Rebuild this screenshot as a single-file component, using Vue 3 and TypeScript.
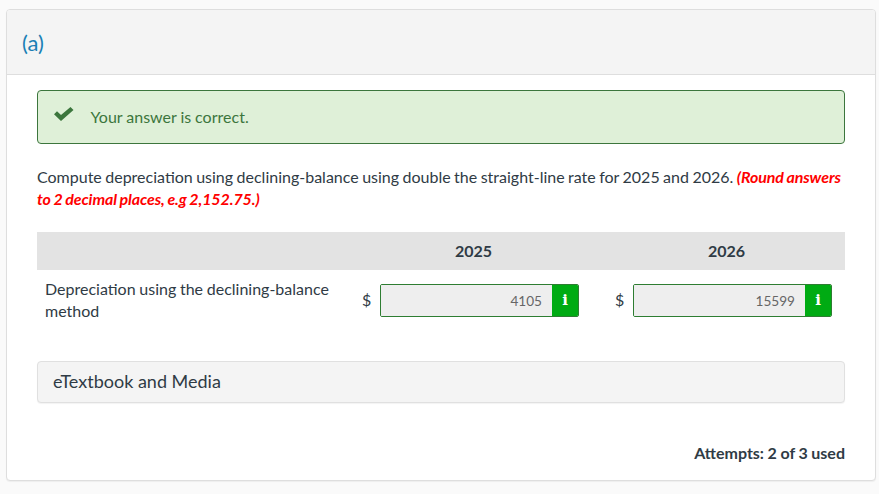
<script setup lang="ts">
interface Answer {
  year: string;
  value: string;
}

const answers: Answer[] = [
  { year: "2025", value: "4105" },
  { year: "2026", value: "15599" },
];
</script>

<template>
  <div class="page">
    <div class="card">
      <div class="card-header">(a)</div>
      <div class="card-body">
        <div class="alert">
          <svg class="check" viewBox="0 0 20 16" width="20" height="16">
            <path d="M0 9.2 L3 6.2 L7 10 L16.5 2 L19.5 5 L7 16 Z" fill="#3c763d" />
          </svg>
          <span>Your answer is correct.</span>
        </div>

        <p class="question">
          Compute depreciation using declining-balance using double the straight-line rate for 2025 and 2026.
          <em>(Round answers to 2 decimal places, e.g 2,152.75.)</em>
        </p>

        <div class="table-head">
          <div class="label-col"></div>
          <div v-for="a in answers" :key="a.year" class="year-col">{{ a.year }}</div>
        </div>
        <div class="table-row">
          <div class="label-col row-label">Depreciation using the declining-balance method</div>
          <div v-for="a in answers" :key="a.year" class="year-col answer">
            <span class="dollar">$</span>
            <div class="input-group">
              <div class="input">{{ a.value }}</div>
              <div class="info">i</div>
            </div>
          </div>
        </div>

        <div class="media">eTextbook and Media</div>

        <div class="attempts">Attempts: 2 of 3 used</div>
      </div>
    </div>
  </div>
</template>

<style>
html,
body {
  margin: 0;
  background: #fafafa;
}
</style>

<style scoped>
.page {
  width: 879px;
  height: 494px;
  box-sizing: border-box;
  padding: 9px 3px 0 6px;
  font-family: Lato, "Open Sans", sans-serif;
  color: #2f3b45;
  overflow: hidden;
}

.card {
  width: 870px;
  height: 472px;
  box-sizing: border-box;
  background: #fff;
  border: 1px solid #dedede;
  border-radius: 4px;
  box-shadow: 0 1px 1px rgba(0, 0, 0, 0.05);
}

.card-header {
  height: 65px;
  box-sizing: border-box;
  padding: 21px 15px 0;
  background: #f4f4f4;
  border-bottom: 1px solid #dedede;
  border-radius: 3px 3px 0 0;
  color: #1a7fb5;
  font-size: 22px;
  line-height: 24px;
}

.card-body {
  padding: 15px 30px 0;
}

.alert {
  height: 54px;
  box-sizing: border-box;
  display: flex;
  align-items: flex-start;
  background: #dff0d8;
  border: 1px solid #3c763d;
  border-radius: 4px;
  color: #3c763d;
  font-size: 16px;
  line-height: 24px;
  padding: 14px 0 0 16px;
}

.check {
  margin: 0 16.5px 0 0;
}

.alert span {
  word-spacing: -0.4px;
  letter-spacing: 0.05px;
}

.question {
  margin: 22px 0 0;
  font-size: 16px;
  line-height: 22px;
  word-spacing: -0.65px;
}

.question em {
  color: #f00;
  font-weight: 700;
  letter-spacing: -0.1px;
  word-spacing: -0.8px;
}

.table-head {
  display: flex;
  align-items: center;
  height: 38px;
  box-sizing: border-box;
  margin-top: 22px;
  padding: 0 0 2px 1px;
  background: #e3e3e3;
  font-weight: 700;
  font-size: 16px;
}

.label-col {
  width: 309px;
  flex: none;
  box-sizing: border-box;
  padding-left: 8px;
}

.year-col {
  width: 253px;
  flex: none;
  text-align: center;
}

.table-row {
  display: flex;
  align-items: center;
  margin-top: 9px;
  height: 43px;
}

.row-label {
  font-size: 16px;
  line-height: 22px;
  word-spacing: -0.4px;
  margin-top: -2px;
}

.answer {
  display: flex;
  align-items: center;
  box-sizing: border-box;
  padding: 0 20px 0 16px;
  font-size: 16px;
  text-align: left;
}

.dollar {
  width: 18px;
  flex: none;
  margin-top: -2px;
}

.input-group {
  flex: 1;
  display: flex;
  height: 33px;
  box-sizing: border-box;
  border: 1px solid #2e7d32;
  border-radius: 2px;
  overflow: hidden;
}

.input {
  flex: 1;
  background: #eee;
  color: #666;
  text-align: right;
  font-size: 13.6px;
  line-height: 33px;
  padding-right: 10px;
}

.info {
  width: 26px;
  background: #00ab13;
  color: #fff;
  text-align: center;
  font-family: "DejaVu Serif", serif;
  font-weight: 700;
  font-size: 15px;
  line-height: 30px;
}

.media {
  height: 42px;
  box-sizing: border-box;
  margin-top: 39px;
  padding-left: 15px;
  background: #f4f4f4;
  border: 1px solid #e0e0e0;
  border-radius: 4px;
  box-shadow: 0 1px 1px rgba(0, 0, 0, 0.05);
  font-size: 18px;
  line-height: 39px;
}

.attempts {
  margin-top: 39px;
  text-align: right;
  font-weight: 700;
  font-size: 16px;
  line-height: 22px;
  word-spacing: -0.3px;
}
</style>
